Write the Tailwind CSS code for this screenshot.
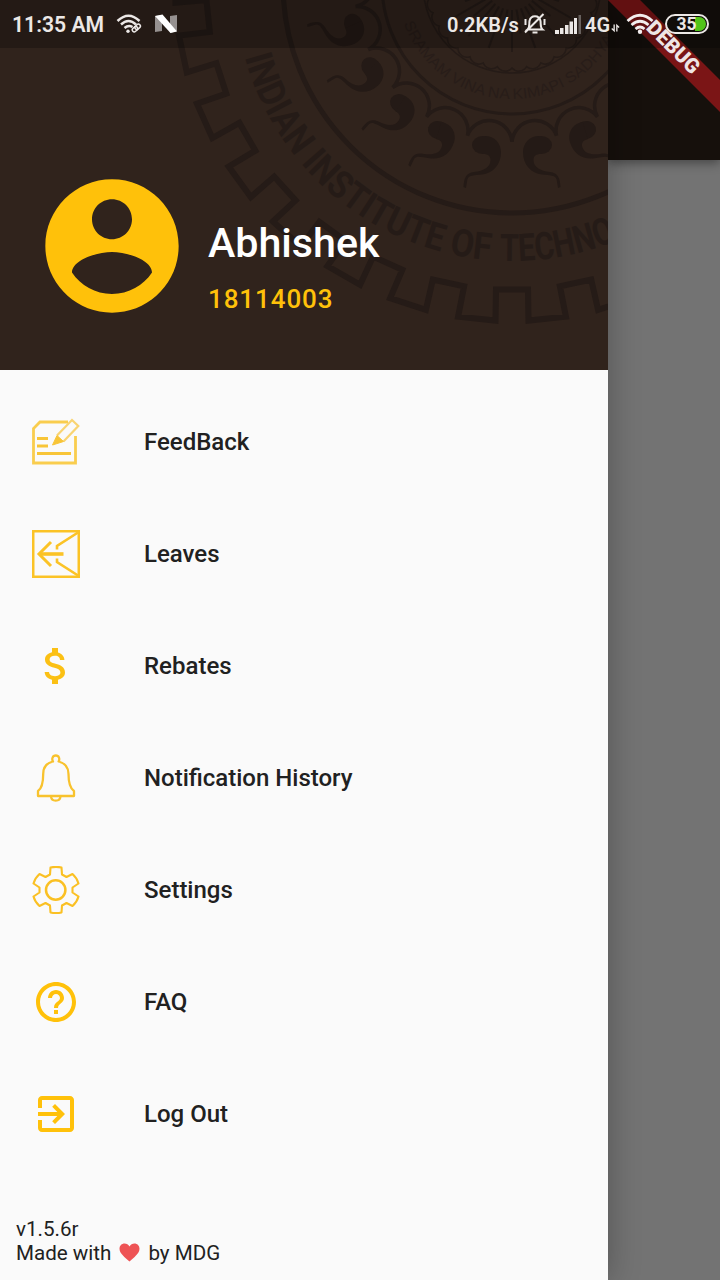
<!DOCTYPE html>
<html lang="en">
<head>
<meta charset="utf-8">
<title>Menu</title>
<script src="https://cdn.jsdelivr.net/npm/@tailwindcss/browser@4"></script>
</head>
<body class="font-['Roboto',sans-serif]">
<div class="relative flex w-[720px] h-[1280px] overflow-hidden bg-[#737373]">

  <!-- Drawer -->
  <aside class="relative z-10 flex flex-col w-[608px] h-full shrink-0 bg-[#fafafa] shadow-[0_0_30px_rgba(0,0,0,0.28)]">
    <header class="relative h-[370px] shrink-0 overflow-hidden bg-[#30231c]">
      <svg class="absolute inset-0" width="608" height="370" viewBox="0 0 608 370" fill="none" stroke="#251b17">
        <g id="emblem" transform="translate(512 -16)">
          <circle r="229" stroke-width="5"/>
          <circle r="130" stroke-width="3"/>
          <circle r="89" stroke-width="1.5"/>
          <path id="gear" stroke-width="6"/>
          <path id="scallops" stroke-width="3.5"/>
          <path id="edge" stroke-width="1.5"/>
          <path id="rays" stroke-width="2"/>
          <g id="curls" fill="#241a16" stroke="none"></g>
          <path id="outerArc" stroke="none" d="M-277 0A277 277 0 0 0 277 0"/>
          <path id="innerArc" stroke="none" d="M-115 0A115 115 0 0 0 115 0"/>
          <g fill="#251b17" stroke="none" font-family="Roboto, sans-serif" font-weight="700">
            <text font-size="38"><textPath href="#outerArc" startOffset="74" textLength="339" lengthAdjust="spacingAndGlyphs">INDIAN INSTITUTE OF</textPath></text>
            <text font-size="38"><textPath href="#outerArc" startOffset="423" textLength="196" lengthAdjust="spacingAndGlyphs">TECHNOLOGY</textPath></text>
            <text fill="#281d19" font-size="15" font-family="Liberation Sans, sans-serif" font-weight="400"><textPath href="#innerArc" startOffset="40" textLength="278" lengthAdjust="spacingAndGlyphs">SRAMAM VINA NA KIMAPI SADHYAM</textPath></text>
          </g>
        </g>
      </svg>
      <div class="relative flex items-center h-full pt-[122px] pl-8">
        <svg class="shrink-0" width="160" height="160" viewBox="0 0 24 24" fill="#ffc10a"><path d="M12 2C6.48 2 2 6.48 2 12s4.48 10 10 10 10-4.48 10-10S17.52 2 12 2zm0 3c1.66 0 3 1.34 3 3s-1.34 3-3 3-3-1.34-3-3 1.34-3 3-3zm0 14.2c-2.5 0-4.71-1.28-6-3.22.03-1.99 4-3.08 6-3.08 1.99 0 5.97 1.09 6 3.08-1.29 1.94-3.5 3.22-6 3.22z"/></svg>
        <div class="mt-[39px] ml-4 flex flex-col font-medium">
          <span class="text-[41.2px] leading-[56px] text-white">Abhishek</span>
          <span class="mt-[10px] text-[26px] leading-[36px] tracking-[0.9px] text-[#ffc10a]">18114003</span>
        </div>
      </div>
    </header>

    <nav class="flex flex-col pt-4 text-[24px] font-medium text-[#212121]">
      <a class="flex h-28 items-center pl-8">
        <svg class="mr-16 shrink-0" width="48" height="48" viewBox="0 0 48 48" fill="none" stroke="#f9cd4e" stroke-width="2.8">
          <path d="M36 4H8L1.500 10.500V45H43.500V18"/>
          <path stroke="#f8c537" stroke-width="3" d="M5 20.500h11M5 28h11M5 35.500h34"/>
          <path d="M25 17.500 40 2 46.300 8 31.500 23.500" stroke-width="2.200" stroke="#f9d472"/>
          <path d="M25 17.500 20.500 27 31.500 23.500Z" fill="#f8c537" stroke="#f8c537" stroke-width="1"/>
        </svg>FeedBack</a>
      <a class="flex h-28 items-center pl-8">
        <svg class="mr-16 shrink-0" width="48" height="48" viewBox="0 0 48 48" fill="none" stroke="#fbc326" stroke-width="2.600">
          <path d="M1.200 1.200H46.800V46.800H1.200Z"/>
          <path d="M46 2.500 25 16V19.500M46 45.500 25 32V28.500"/>
          <path d="M31.500 24H7" stroke-width="3.600"/>
          <path d="M19 12 7 24 19 36" stroke-width="3"/>
        </svg>Leaves</a>
      <a class="flex h-28 items-center pl-8">
        <svg class="mr-16 shrink-0" width="48" height="48" viewBox="0 0 24 24" fill="#fbc014"><path d="M11.800 10.900c-2.270-.59-3-1.200-3-2.150 0-1.090 1.010-1.850 2.700-1.850 1.780 0 2.440.85 2.500 2.100h2.210c-.07-1.720-1.120-3.300-3.210-3.810V3h-3v2.160c-1.940.42-3.500 1.680-3.500 3.610 0 2.310 1.910 3.460 4.700 4.130 2.500.6 3 1.480 3 2.410 0 .69-.49 1.790-2.700 1.790-2.060 0-2.870-.92-2.980-2.100h-2.200c.12 2.190 1.760 3.420 3.680 3.830V21h3v-2.150c1.950-.37 3.500-1.500 3.500-3.550 0-2.840-2.430-3.810-4.700-4.400z"/></svg>Rebates</a>
      <a class="flex h-28 items-center pl-8">
        <svg class="mr-16 shrink-0" width="48" height="48" viewBox="0 0 48 48" fill="none" stroke="#f8c22d" stroke-width="2.300" stroke-linejoin="round">
          <path d="M21 7.500C19.500 5 20.500 1.500 23.800 1.500S28 5 26.600 7.500C33 9 36.500 14 36.500 20C36.500 28 37.500 34 42 37V42H6V37C10.500 34 11.200 28 11.200 20C11.200 14 14.500 9 21 7.500Z"/>
          <path d="M19 42.500C19.500 48 28 48 28.500 42.500"/>
        </svg>Notification History</a>
      <a class="flex h-28 items-center pl-8">
        <svg class="mr-16 shrink-0" width="48" height="48" viewBox="0 0 48 48" fill="none" stroke="#fac023" stroke-width="2.100" stroke-linejoin="round">
          <path d="M18.500 1.500Q24 .2 29.500 1.500L30 8.500 34.500 11 40.500 8Q45 12 46.500 17.500L40.500 21.500V26.500L46.500 30.500Q45 36 40.500 40L34.500 37 30 39.500 29.500 46.500Q24 47.800 18.500 46.500L18 39.500 13.500 37 7.500 40Q3 36 1.500 30.500L7.500 26.500V21.500L1.500 17.500Q3 12 7.500 8L13.500 11 18 8.500Z"/>
          <circle cx="23.700" cy="24" r="9.700" stroke-width="2.500"/>
        </svg>Settings</a>
      <a class="flex h-28 items-center pl-8">
        <svg class="mr-16 shrink-0" width="48" height="48" viewBox="0 0 24 24" fill="#ffc10a"><path d="M11 18h2v-2h-2v2zm1-16C6.480 2 2 6.480 2 12s4.480 10 10 10 10-4.480 10-10S17.520 2 12 2zm0 18c-4.410 0-8-3.590-8-8s3.590-8 8-8 8 3.590 8 8-3.590 8-8 8zm0-14c-2.210 0-4 1.790-4 4h2c0-1.100.9-2 2-2s2 .9 2 2c0 2-3 1.750-3 5h2c0-2.250 3-2.500 3-5 0-2.210-1.790-4-4-4z"/></svg>FAQ</a>
      <a class="flex h-28 items-center pl-8">
        <svg class="mr-16 shrink-0" width="48" height="48" viewBox="0 0 24 24" fill="#ffc10a"><path d="M10.090 15.590L11.500 17l5-5-5-5-1.410 1.410L12.670 11H3v2h9.670l-2.580 2.590zM19 3H5c-1.110 0-2 .9-2 2v4h2V5h14v14H5v-4H3v4c0 1.100.89 2 2 2h14c1.100 0 2-.9 2-2V5c0-1.100-.9-2-2-2z"/></svg>Log Out</a>
    </nav>

    <footer class="mt-auto flex flex-col pl-4 pb-[15px] text-[20.6px] leading-6 text-[#212121]">
      <span>v1.5.6r</span>
      <span class="flex items-center">Made with
        <svg class="mx-2 -mt-0.5" width="21" height="19" viewBox="0 0 21 19" fill="#ee5355"><path d="M10.500 18.500C6 14.500.5 10.500.5 5.800.5 2.600 2.800.5 5.500.5c2.100 0 4 1.200 5 3 1-1.800 2.900-3 5-3 2.700 0 5 2.100 5 5.300 0 4.700-5.500 8.700-10 12.700z"/></svg>by MDG</span>
    </footer>
  </aside>

  <!-- Dimmed page behind the drawer -->
  <main class="flex-1"><div class="h-40 bg-[#16100c] shadow-[0_3px_10px_rgba(0,0,0,0.4)]"></div></main>

  <!-- Status bar -->
  <div class="absolute inset-x-0 top-0 z-20 h-12 bg-black/25"></div>
  <svg class="absolute right-0 top-0 z-20" width="112" height="112" viewBox="0 0 112 112">
    <path fill="#7b1516" d="M0 0H32L112 80V112Z"/>
    <path fill="#000" fill-opacity=".2" d="M0 0H32L80 48H48Z"/>
    <text x="0" y="0" transform="translate(65.500 47) rotate(45)" text-anchor="middle" dominant-baseline="central" fill="#efe5e5" font-family="Roboto, sans-serif" font-size="20.500" font-weight="900">DEBUG</text>
  </svg>
  <div class="absolute inset-x-0 top-0 z-30 flex h-12 items-center text-[21px] font-medium text-[#ece8e6]">
    <span class="ml-3 mt-[2px] w-[104px] whitespace-nowrap text-[21.2px] font-semibold">11:35 AM</span>
    <svg width="28" height="22" viewBox="0 0 28 22" fill="none" stroke="#ece8e6" stroke-width="2.500">
      <path d="M1.500 8Q12.500-2.500 23.500 8M5 11.500Q12.500 4.500 20 11.500M8.500 15Q12.500 11.500 16.500 14"/><circle cx="12" cy="18.300" r="1.700" fill="#ece8e6" stroke="none"/>
      <g stroke-width="1.500" transform="rotate(-42 20 15)"><rect x="15.500" y="13.200" width="6" height="4" rx="2"/><rect x="19" y="13.200" width="6" height="4" rx="2"/></g>
    </svg>
    <svg class="ml-[10px]" width="24" height="20" viewBox="0 0 24 20"><path fill="#969190" d="M1 2 8 1V17L1 18ZM16 2 23 1V17L16 19Z"/><path fill="#fff" d="M1 2 8.500 .5 23 17.500 16.500 19Z"/></svg>
    <span class="ml-auto mt-px w-[76px] whitespace-nowrap text-[20px] font-semibold">0.2KB/s</span>
    <svg width="24" height="22" viewBox="0 0 24 22" fill="none" stroke="#ece8e6" stroke-width="2"><path d="M4.500 16.500C7 14.500 6 11 6.500 8 7.200 4.500 9 3.300 12 3.300S16.800 4.500 17.500 8C18 11 17 14.500 19.500 16.500ZM2 19.500 20.500 1M2.500 6V12M21.500 6V12"/><path stroke-width="2" d="M9.500 19.500h5"/></svg>
    <svg class="ml-2" width="26" height="19" viewBox="0 0 26 19" fill="#ece8e6"><path d="M0 15h4v4H0zM5 13h3.500v6H5zM10 10h3.500v9H10zM14.500 6.500H18V19h-3.500zM19 3h3v16h-3z"/><path fill="#68615e" d="M23.500 0H26v19h-2.500z"/></svg>
    <span class="ml-1 mt-px w-[26px] whitespace-nowrap text-[20px] font-semibold">4G</span>
    <svg width="9" height="10" viewBox="0 0 10 10" class="mt-2" fill="none" stroke="#ece8e6" stroke-width="1.500"><path d="M3.500 1V8L.8 5.500M6.500 9V2L9 4.500"/></svg>
    <svg class="ml-[6px]" width="28" height="22" viewBox="0 0 28 22" fill="none" stroke="#f3eeee" stroke-width="2.700"><path d="M1.500 8Q14-3.500 26.500 8M5.500 12Q14 4.500 22.500 12M9.500 16Q14 12 18.500 16"/><circle cx="14" cy="18.800" r="2.200" fill="#f3eeee" stroke="none"/></svg>
    <div class="ml-[11px] mr-[11px] flex h-5 w-[44px] items-center rounded-full border-2 border-[#ece8e6] p-px">
      <span class="flex h-full w-full items-center justify-center rounded-full bg-linear-to-r from-transparent from-70% to-[#52c41a] to-70% pr-px text-[17.5px] font-bold">35</span>
    </div>
  </div>
</div>
<script>
  // Builds the repeating parts of the emblem around its centre.
  const at = (r, deg) => {
    const t = deg * Math.PI / 180;
    return (r * Math.sin(t)).toFixed(1) + ' ' + (r * Math.cos(t)).toFixed(1);
  };
  const set = (id, d) => document.getElementById(id).setAttribute('d', d);

  let gear = '';
  for (let i = 0; i < 30; i++) {
    const a = i * 12;
    gear += (i ? 'L' : 'M') + at(306, a - 3) + 'L' + at(306, a + 3) + 'L' + at(337, a + 2.8) + 'L' + at(337, a + 9.2);
  }
  set('gear', gear + 'Z');

  const step = 360 / 22;
  let scallops = 'M' + at(158, 0);
  let curls = '';
  for (let i = 0; i < 22; i++) {
    scallops += 'A23 23 0 0 1 ' + at(158, (i + 1) * step);
  }
  const curl = '<ellipse cx="-29.500" cy="161" rx="10.500" ry="9"/><path d="M-29 152C-18 151-11 159-11 168C-11 181-19 189-30 190.500C-38 191.500-43 191-44.500 195L-46 204L-48.500 203C-48 194-46 189-38 188C-28 187-21.500 183-21.500 176C-21.500 172-24 170-29 170Z"/>';
  for (let i = 0; i < 8; i++) {
    curls += '<g transform="rotate(' + i * step + ')">' + curl + '</g>';
    curls += '<g transform="scale(-1 1) rotate(' + i * step + ')">' + curl + '</g>';
  }
  set('scallops', scallops);
  document.getElementById('curls').innerHTML = curls;

  let edge = 'M' + at(84, -90), rays = '';
  for (let a = -90; a < 90; a += 10) edge += 'A9 9 0 0 0 ' + at(84, a + 10);
  for (let a = -80; a <= 80; a += 10) rays += 'M' + at(26, a) + 'L' + at(a % 20 ? 50 : 68, a);
  set('edge', edge);
  set('rays', rays);
</script>
</body>
</html>
